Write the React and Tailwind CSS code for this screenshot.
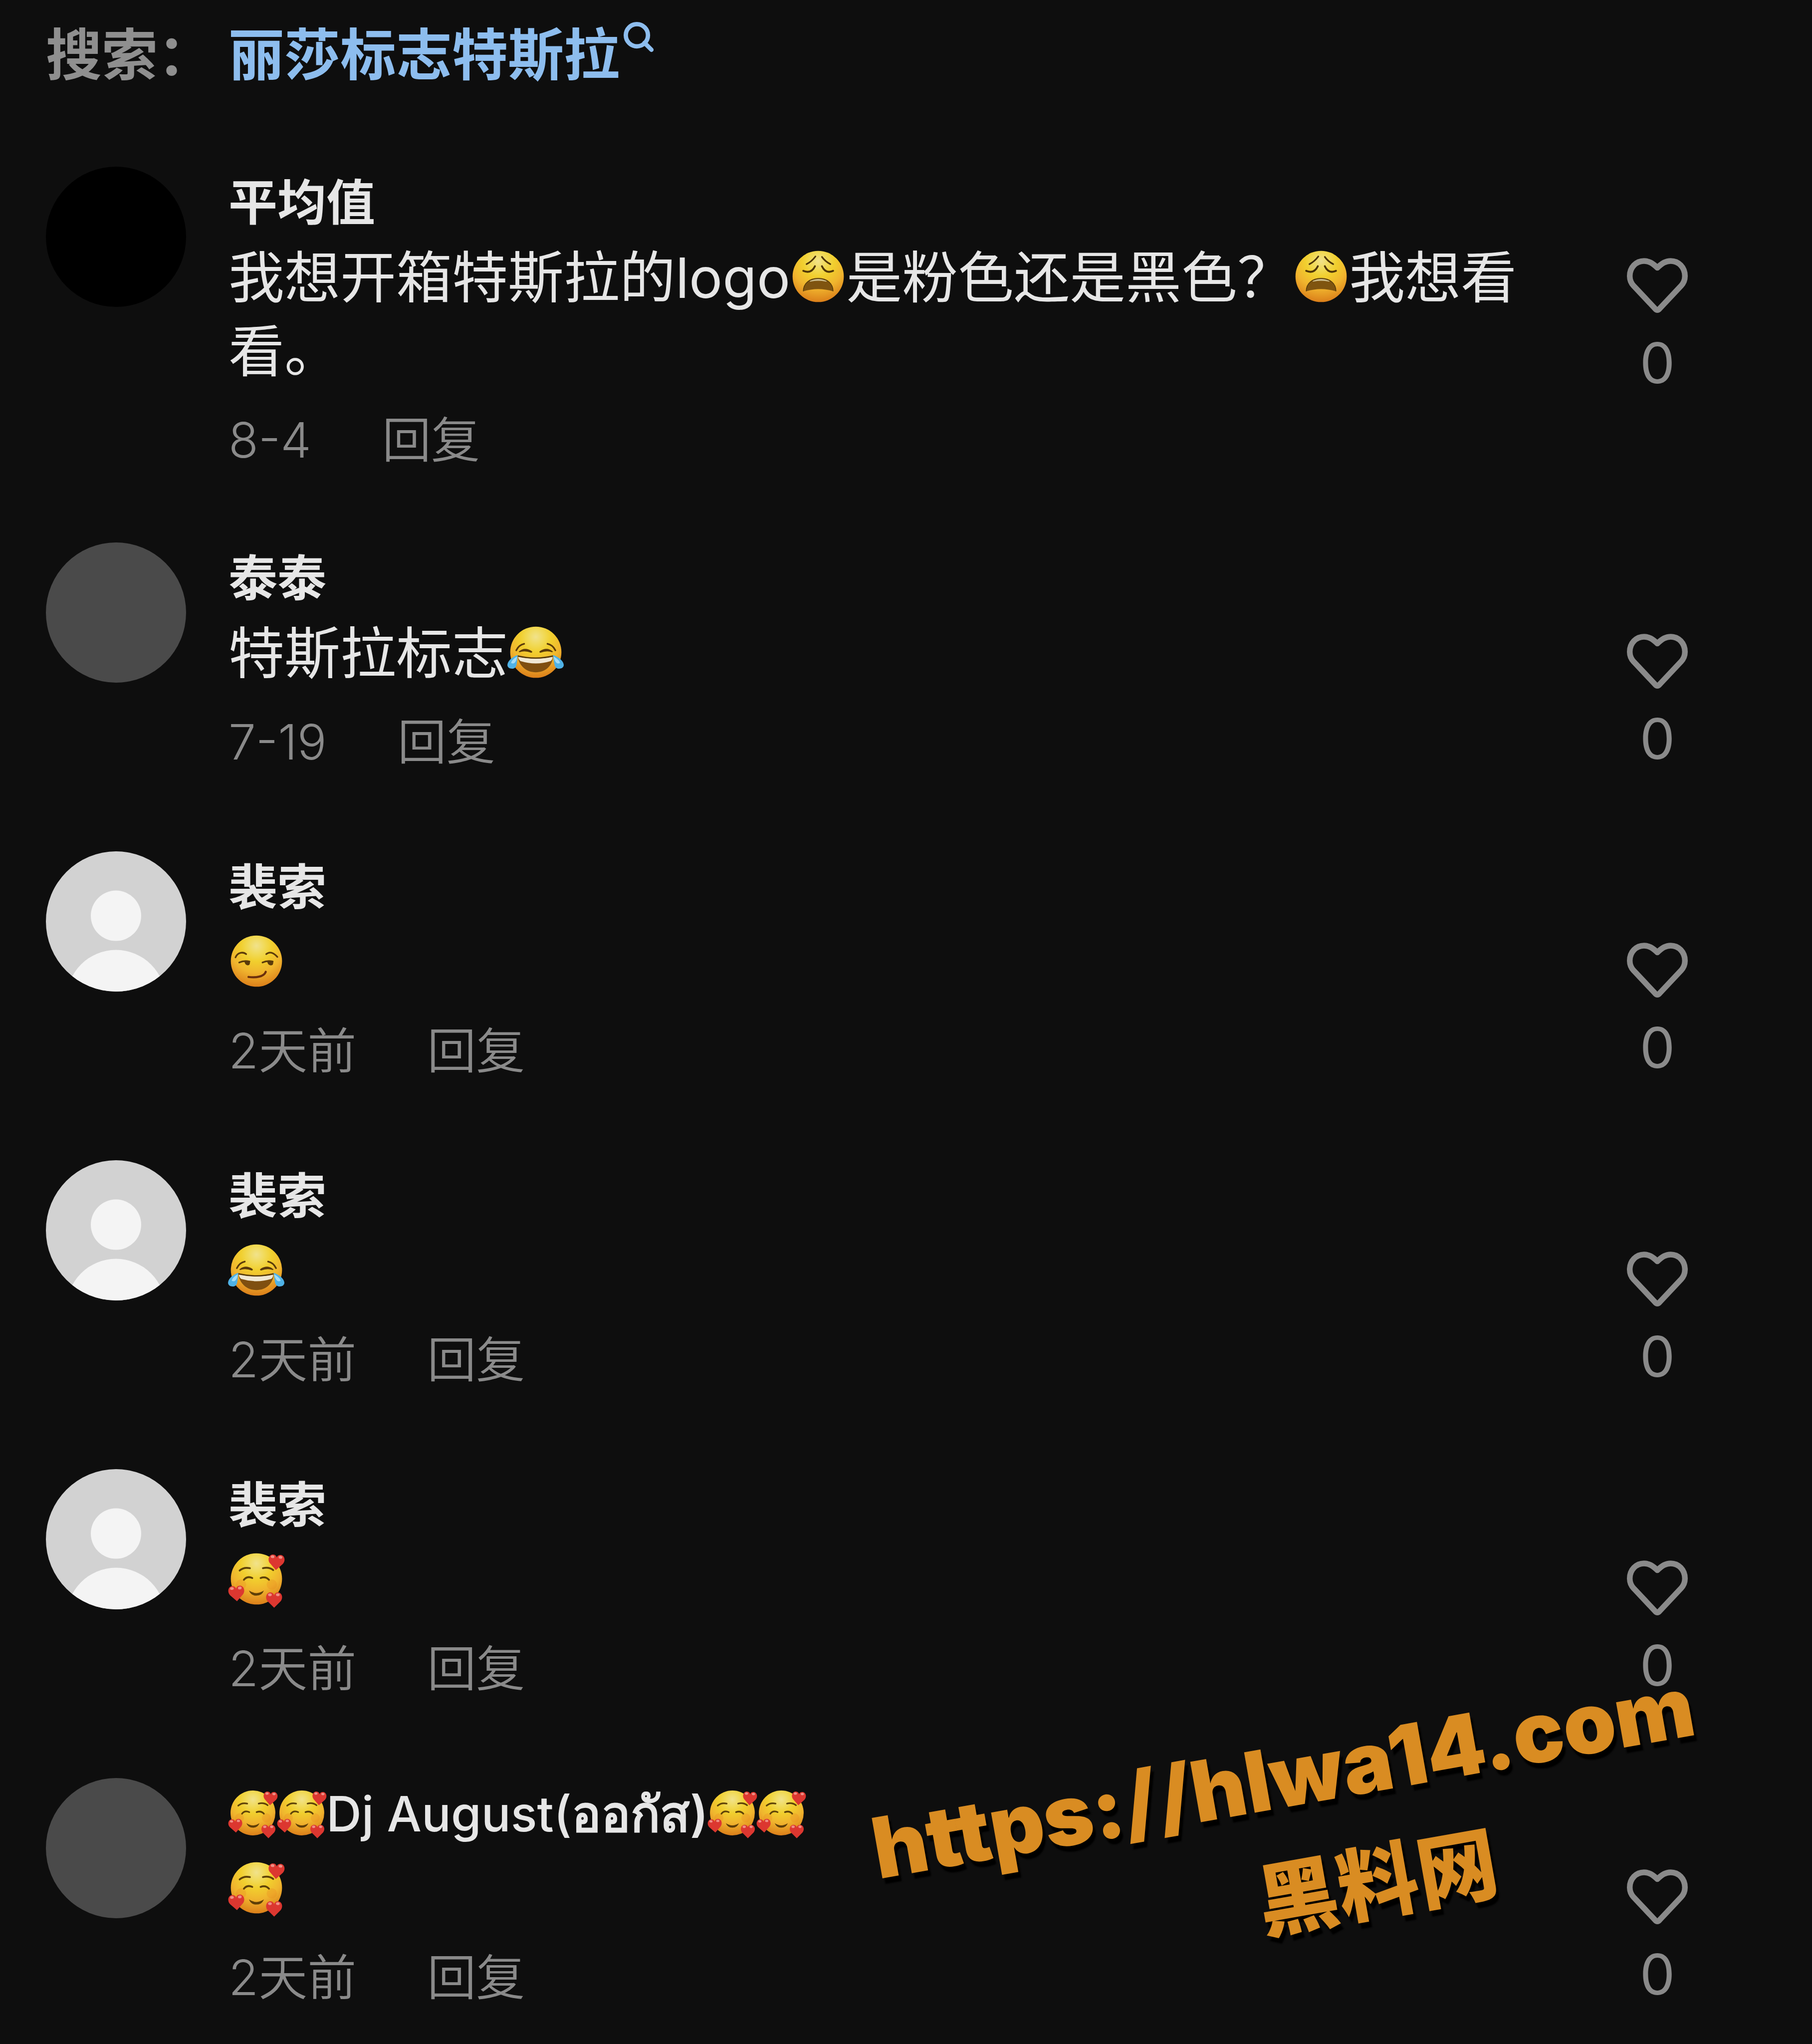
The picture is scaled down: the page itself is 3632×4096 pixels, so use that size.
import React, { useId } from "react";

const comments = [
  {
    id: 1,
    avatar: "black",
    name: ["平均值"],
    body: ["我想开箱特斯拉的logo", ":weary:", "是粉色还是黑色？", ":weary:", "我想看看。"],
    time: "8-4",
    likes: 0,
  },
  { id: 2, avatar: "gray", name: ["泰泰"], body: ["特斯拉标志", ":joy:"], time: "7-19", likes: 0 },
  { id: 3, avatar: "default", name: ["裴索"], body: [":smirk:"], time: "2天前", likes: 0 },
  { id: 4, avatar: "default", name: ["裴索"], body: [":joy:"], time: "2天前", likes: 0 },
  { id: 5, avatar: "default", name: ["裴索"], body: [":loved:"], time: "2天前", likes: 0 },
  {
    id: 6,
    avatar: "gray",
    name: [":loved:", ":loved:", <span className="font-medium">Dj August(</span>, "ออกัส)", ":loved:", ":loved:"],
    body: [":loved:"],
    time: "2天前",
    likes: 0,
  },
];

const HEART = "M0 18 L-14 4 C-20 -3 -17 -14 -9 -15 C-4 -15 -1 -13 0 -9 C1 -13 4 -15 9 -15 C17 -14 20 -3 14 4 Z";

const WearyFace = () => (
  <>
    <g fill="none" stroke="#4f3608" strokeLinecap="round" strokeWidth="3.5">
      <path d="M54 17 Q46 28 35 33.5" />
      <path d="M68 18 Q75 28 86 33.5" />
      <path d="M28 48 Q45 55 53 38" strokeWidth="4" />
      <path d="M68 38 Q76 55 92 48" strokeWidth="4" />
    </g>
    <path d="M28 92 C28 74 42 64 60 64 C78 64 92 74 92 92 Q76 87 60 87 Q44 87 28 92Z" fill="#7f5410" />
    <path d="M43 69 Q60 61 77 69 Q80 71 76 71 Q60 68 44 71 Q40 71 43 69Z" fill="#c9b98a" />
    <path d="M28 92 C28 74 42 64 60 64 C78 64 92 74 92 92" fill="none" stroke="#4f3608" strokeWidth="1.5" />
  </>
);

const JoyFace = () => (
  <>
    <g fill="none" stroke="#5a3a0a" strokeLinecap="round" strokeWidth="3.5">
      <path d="M18 56 Q24 44 35 42" />
      <path d="M85 42 Q96 44 102 56" />
    </g>
    <path d="M23 59 Q36 47 52 58 Q53 61 50 61 Q36 56 25 60Z" fill="#5a3a0a" />
    <path d="M68 58 Q84 47 97 59 L95 60 Q84 56 70 61 Q67 61 68 58Z" fill="#5a3a0a" />
    <path d="M21 68 Q60 77 97 68 C96 90 80 103 60 103 C40 103 24 90 21 68Z" fill="#7f4f10" />
    <path d="M22 70 Q60 78 96 70 Q96 76 92 79 Q60 89 27 79 Q23 76 22 70Z" fill="#f0e8d4" />
    <path d="M21 68 Q60 77 97 68" fill="none" stroke="#4f3608" strokeWidth="2.5" />
    <path d="M21 66 C10 70 0 78 -1 87 C-1 94 6 96 12 95 C19 93 19 88 21 66Z" fill="#4fb2e6" />
    <path d="M20 69 C13 73 8 78 7 83 C11 86 18 84 20 69Z" fill="#a4dcf6" />
    <path d="M97 66 C108 70 119 78 120 87 C120 94 113 96 107 95 C100 93 100 88 97 66Z" fill="#4fb2e6" />
    <path d="M98 69 C105 73 111 78 112 83 C108 86 101 84 98 69Z" fill="#a4dcf6" />
  </>
);

const SmirkFace = () => (
  <>
    <g fill="none" stroke="#5a3a0a" strokeLinecap="round" strokeWidth="3.5">
      <path d="M15 52 C20 40 32 40 38 45" />
      <path d="M81 45 C88 39 96 41 105 51" />
      <path d="M23 63 Q34 58 45 61" />
      <path d="M73 63 Q84 58 95 61" />
      <path d="M43 94 C58 96 76 94 80 83" stroke="#6b2f0c" strokeWidth="4.5" />
    </g>
    <path d="M34 60 L46 61 Q47 69 41 69 Q35 68 34 60Z" fill="#5a3a0a" />
    <path d="M83 60 L96 61 Q97 70 90 69 Q84 68 83 60Z" fill="#5a3a0a" />
  </>
);

const LovedFace = () => (
  <>
    <g fill="none" stroke="#5e4208" strokeLinecap="round" strokeWidth="4">
      <path d="M24 42 Q33 34 46 37" />
      <path d="M74 37 Q87 34 96 41" />
      <path d="M33 62 Q40 53 51 58" />
      <path d="M69 58 Q80 54 87 62" />
    </g>
    <path d="M44 85 Q60 96 76 85 Q72 96 60 96 Q48 96 44 85Z" fill="#5e3f08" />
    <circle cx="27" cy="72" r="11" fill="#e8801c" opacity="0.25" />
    <circle cx="93" cy="72" r="11" fill="#e8801c" opacity="0.25" />
    {["translate(103 23) rotate(4)", "translate(17 90) rotate(-4)", "translate(98 104)"].map((t) => (
      <g key={t} transform={t}>
        <path d={HEART} fill="#dc3730" />
        <ellipse cx="-9" cy="-10" rx="4" ry="3" fill="#ef8f86" />
        <ellipse cx="8" cy="-10" rx="4" ry="3" fill="#ef8f86" />
      </g>
    ))}
  </>
);

const FACES = {
  ":weary:": { label: "😩", Face: WearyFace },
  ":joy:": { label: "😂", Face: JoyFace },
  ":smirk:": { label: "😏", Face: SmirkFace },
  ":loved:": { label: "🥰", Face: LovedFace },
};

const Emoji = ({ code }) => {
  const { label, Face } = FACES[code];
  const id = useId();

  return (
    <svg
      role="img"
      aria-label={label}
      viewBox="0 0 120 120"
      className="inline-block size-[1em] overflow-visible align-[-0.12em]"
    >
      <defs>
        <radialGradient id={id} cx="0.5" cy="0.2" r="0.8">
          <stop offset="0" stopColor="#f1e28c" />
          <stop offset="0.2" stopColor="#f1da58" />
          <stop offset="0.38" stopColor="#f1cf2e" />
          <stop offset="0.66" stopColor="#f0b42e" />
          <stop offset="1" stopColor="#db7f1a" />
        </radialGradient>
      </defs>
      <circle cx="60" cy="60" r="55" fill={`url(#${id})`} />
      <Face />
    </svg>
  );
};

// plain strings stay text, ":code:" parts become emoji
const RichText = ({ parts }) =>
  parts.map((part, i) =>
    FACES[part] ? <Emoji key={i} code={part} /> : <React.Fragment key={i}>{part}</React.Fragment>
  );

const Avatar = ({ kind }) => {
  if (kind === "default") {
    return (
      <svg viewBox="0 0 320 320" className="size-[281px] shrink-0 rounded-full bg-[#d2d2d2]">
        <circle cx="160" cy="147" r="57.5" fill="#f4f4f4" />
        <circle cx="160" cy="338" r="113" fill="#f4f4f4" />
      </svg>
    );
  }
  return (
    <div className={`size-[281px] shrink-0 rounded-full ${kind === "black" ? "bg-black" : "bg-[#4a4a4a]"}`} />
  );
};

const LikeButton = ({ count }) => (
  <button className="flex w-[280px] shrink-0 flex-col items-center gap-[26px] self-start pt-[183px] text-[#8a8a8a]">
    <svg viewBox="0 0 139 127" className="h-[112px] w-[122px]" fill="none" stroke="currentColor">
      <path
        d="M69.5 22 C58 11 50 6.5 39 6.5 C21 6.5 6.5 21 6.5 41 C6.5 51 10 58 16 64 L65 116 Q69.5 121 74 116 L123 64 C129 58 132.5 51 132.5 41 C132.5 21 118 6.5 100 6.5 C89 6.5 81 11 69.5 22Z"
        strokeWidth="13"
        strokeLinejoin="round"
      />
    </svg>
    <span className="text-[112px] leading-[144px]">{count}</span>
  </button>
);

const Comment = ({ avatar, name, body, time, likes }) => (
  <li className="flex">
    <Avatar kind={avatar} />
    <div className="ml-[85px] mr-12 min-w-0 flex-1">
      <h3 className="text-[98px] font-semibold leading-[144px] text-[#e6e6e6]">
        <RichText parts={name} />
      </h3>
      <p className="mt-1 text-[112px] leading-[148px] text-[#e6e6e6]">
        <RichText parts={body} />
      </p>
      <div className="mt-8 flex gap-[142px] text-[98px] font-[350] leading-[144px] text-[#8a8a8a]">
        <span>{time}</span>
        <button>回复</button>
      </div>
    </div>
    <LikeButton count={likes} />
  </li>
);

const SearchBar = () => (
  <header className="flex text-[112px] font-semibold leading-[148px]">
    <span className="w-[366px] shrink-0 text-[#8f8f8f]">搜索：</span>
    <a href="#search" className="flex items-start gap-[8px] text-[#8dbdee]">
      丽莎标志特斯拉
      <svg viewBox="0 0 70 70" className="mt-2 size-[61px]" fill="none" stroke="currentColor" strokeWidth="10">
        <circle cx="30.5" cy="30.5" r="25.5" />
        <path d="M48 48 L64 64" strokeLinecap="round" />
      </svg>
    </a>
  </header>
);

const Watermark = () => (
  <div className="pointer-events-none absolute bottom-[198px] right-[207px] -rotate-10 whitespace-nowrap text-center font-['Inter','Noto_Sans_CJK_SC',sans-serif] font-black text-[#d98c22] [text-shadow:4px_12px_3px_#000]">
    <p className="text-[169px] leading-[246px]">https://hlwa14.com</p>
    <p className="pl-[300px] font-['Noto_Sans_CJK_SC',sans-serif] text-[162px] leading-[216px]">黑料网</p>
  </div>
);

const App = () => {
  return (
    <main className="relative min-h-screen overflow-hidden bg-[#0e0e0e] pb-[58px] pl-[92px] pr-[170px] pt-9 font-['Inter','Noto_Sans_CJK_SC',sans-serif]">
      <SearchBar />
      <ul className="mt-[150px] flex flex-col gap-[147px] [&>li:first-child]:-mb-[14px]">
        {comments.map((comment) => (
          <Comment key={comment.id} {...comment} />
        ))}
      </ul>
      <Watermark />
    </main>
  );
};

export default App;
